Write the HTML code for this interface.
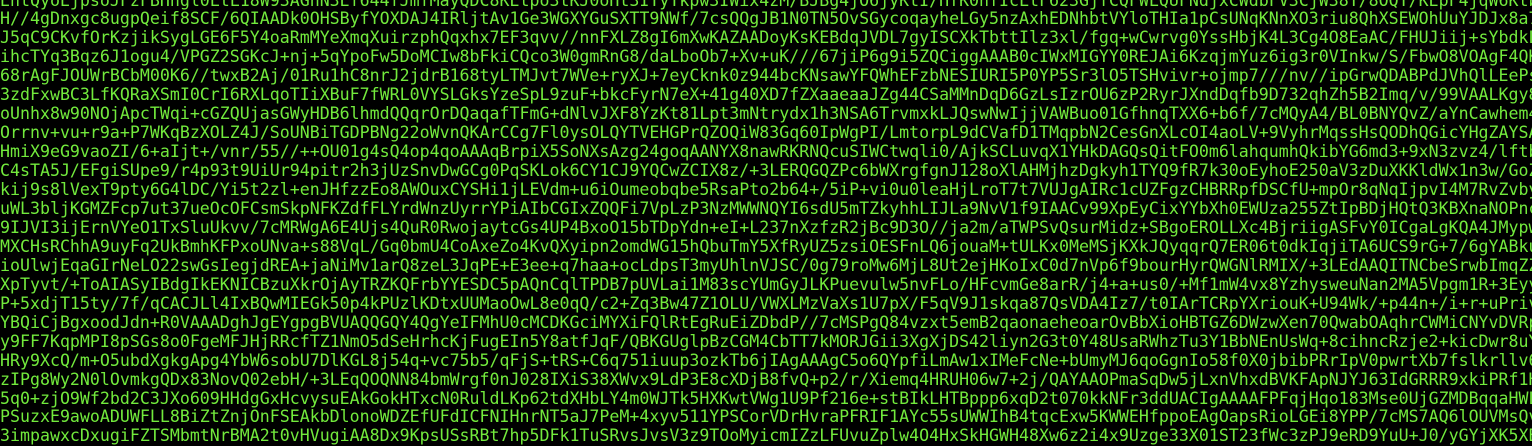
<!DOCTYPE html>
<html><head><meta charset="utf-8"><style>
html,body{margin:0;padding:0;background:#000;width:1532px;height:442px;overflow:hidden}
pre{position:absolute;left:0;top:-8.5px;margin:0;font-family:"DejaVu Sans Mono","Liberation Mono",monospace;font-size:16.6px;line-height:18.96px;color:#72ea3c;white-space:pre}
</style></head><body><pre>EhtQyoEjpsoJFzFBHhgl0LtL18W93AGhN3Ef644fJmfMayQDC8KEtpo3tKJ0oHt3ITyTkpw3IWix4zM/BJBg4jO6jyKtI/HfK0hfIcLtF623GjfCQFWLQUFNdjxCWdbFV3CjW38T/8OQT/KEpF4jqW6KtbC
H//4gDnxgc8ugpQeif8SCF/6QIAADk0OHSByfYOXDAJ4IRljtAv1Ge3WGXYGuSXTT9NWf/7csQQgJB1N0TN5OvSGycoqayheLGy5nzAxhEDNhbtVYloTHIa1pCsUNqKNnXO3riu8QhXSEWOhUuYJDJx8a7
J5qC9CKvfOrKzjikSygLGE6F5Y4oaRmMYeXmqXuirzphQqxhx7EF3qvv//nnFXLZ8gI6mXwKAZAADoyKsKEBdqJVDL7gyISCXkTbttIlz3xl/fgq+wCwrvg0YssHbjK4L3Cg4O8EaAC/FHUJiij+sYbdkL
ihcTYq3Bqz6J1ogu4/VPGZ2SGKcJ+nj+5qYpoFw5DoMCIw8bFkiCQco3W0gmRnG8/daLboOb7+Xv+uK///67jiP6g9i5ZQCiggAAAB0cIWxMIGYY0REJAi6KzqjmYuz6ig3r0VInkw/S/FbwO8VOAgF4QK
68rAgFJOUWrBCbM00K6//twxB2Aj/01Ru1hC8nrJ2jdrB168tyLTMJvt7WVe+ryXJ+7eyCknk0z944bcKNsawYFQWhEFzbNESIURI5P0YP5Sr3lO5TSHvivr+ojmp7///nv//ipGrwQDABPdJVhQlLEePs
3zdFxwBC3LfKQRaXSmI0CrI6RXLqoTIiXBuF7fWRL0VYSLGksYzeSpL9zuF+bkcFyrN7eX+41g40XD7fZXaaeaaJZg44CSaMMnDqD6GzLsIzrOU6zP2RyrJXndDqfb9D732qhZh5B2Imq/v/99VAALKgy8
oUnhx8w90NOjApcTWqi+cGZQUjasGWyHDB6lhmdQQqrOrDQaqafTFmG+dNlvJXF8YzKt81Lpt3mNtrydx1h3NSA6TrvmxkLJQswNwIjjVAWBuo01GfhnqTXX6+b6f/7cMQyA4/BL0BNYQvZ/aYnCawhem4
Orrnv+vu+r9a+P7WKqBzXOLZ4J/SoUNBiTGDPBNg22oWvnQKArCCg7Fl0ysOLQYTVEHGPrQZOQiW83Gq60IpWgPI/LmtorpL9dCVafD1TMqpbN2CesGnXLcOI4aoLV+9VyhrMqssHsQODhQGicYHgZAYSA
HmiX9eG9vaoZI/6+aIjt+/vnr/55//++OU01g4sQ4op4qoAAAqBrpiX5SoNXsAzg24goqAANYX8nawRKRNQcuSIWCtwqli0/AjkSCLuvqX1YHkDAGQsQitFO0m6lahqumhQkibYG6md3+9xN3zvz4/lftb
C4sTA5J/EFgiSUpe9/r4p93t9UiUr94pitr2h3jUzSnvDwGCg0PqSKLok6CY1CJ9YQCwZCIX8z/+3LERQGQZPc6bWXrgfgnJ128oXlAHMjhzDgkyh1TYQ9fR7k30oEyhoE250aV3zDuXKKldWx1n3w/GoZ
kij9s8lVexT9pty6G4lDC/Yi5t2zl+enJHfzzEo8AWOuxCYSHi1jLEVdm+u6iOumeobqbe5RsaPto2b64+/5iP+vi0u0leaHjLroT7t7VUJgAIRc1cUZFgzCHBRRpfDSCfU+mpOr8qNqIjpvI4M7RvZvby
uWL3bljKGMZFcp7ut37ueOcOFCsmSkpNFKZdfFLYrdWnzUyrrYPiAIbCGIxZQQFi7VpLzP3NzMWWNQYI6sdU5mTZkyhhLIJLa9NvV1f9IAACv99XpEyCixYYbXh0EWUza255ZtIpBDjHQtQ3KBXnaNOPnc
9IJVI3ijErnVYeO1TxSluUkvv/7cMRWgA6E4Ujs4QuR0RwojaytcGs4UP4BxoO15bTDpYdn+eI+L237nXzfzR2jBc9D3O//ja2m/aTWPSvQsurMidz+SBgoEROLLXc4BjriigASFvY0ICgaLgKQA4JMypw
MXCHsRChhA9uyFq2UkBmhKFPxoUNva+s88VqL/Gq0bmU4CoAxeZo4KvQXyipn2omdWG15hQbuTmY5XfRyUZ5zsiOESFnLQ6jouaM+tULKx0MeMSjKXkJQyqqrQ7ER06t0dkIqjiTA6UCS9rG+7/6gYABku
ioUlwjEqaGIrNeLO22swGsIegjdREA+jaNiMv1arQ8zeL3JqPE+E3ee+q7haa+ocLdpsT3myUhlnVJSC/0g79roMw6MjL8Ut2ejHKoIxC0d7nVp6f9bourHyrQWGNlRMIX/+3LEdAAQITNCbeSrwbImqZZ
XpTyvt/+ToAIASyIBdgIkEKNICBzuXkrOjAyTRZKQFrbYYESDC5pAQnCqlTPDB7pUVLai1M83scYUmGyJLKPuevulw5nvFLo/HFcvmGe8arR/j4+a+us0/+Mf1mW4vx8YzhysweuNan2MA5Vpgm1R+3Eyy
P+5xdjT15ty/7f/qCACJLl4IxBQwMIEGk50p4kPUzlKDtxUUMaoOwL8e0qQ/c2+Zq3Bw47Z1OLU/VWXLMzVaXs1U7pX/F5qV9J1skqa87QsVDA4Iz7/t0IArTCRpYXriouK+U94Wk/+p44n+/i+r+uPriv
YBQiCjBgxoodJdn+R0VAAADghJgEYgpgBVUAQQGQY4QgYeIFMhU0cMCDKGciMYXiFQlRtEgRuEiZDbdP//7cMSPgQ84vzxt5emB2qaonaeheoarOvBbXioHBTGZ6DWzwXen70QwabOAqhrCWMiCNYvDVRp
y9FF7KqpMPI8pSGs8o0FgeMFJHjRRcfTZ1NmO5dSeHrhcKjFugEIn5Y8atfJqF/QBKGUglpBzCGM4CbTT7kMORJGii3XgXjDS42liyn2G3t0Y48UsaRWhzTu3Y1BbNEnUsWq+8cihncRzje2+kicDwr8uY
HRy9XcQ/m+O5ubdXgkgApg4YbW6sobU7DlKGL8j54q+vc75b5/qFjS+tRS+C6q751iuup3ozkTb6jIAgAAAgC5o6QYpfiLmAw1xIMeFcNe+bUmyMJ6qoGgnIo58f0X0jbibPRrIpV0pwrtXb7fslkrllv6
zIPg8Wy2N0lOvmkgQDx83NovQ02ebH/+3LEqQOQNN84bmWrgf0nJ028IXiS38XWvx9LdP3E8cXDjB8fvQ+p2/r/Xiemq4HRUH06w7+2j/QAYAAOPmaSqDw5jLxnVhxdBVKFApNJYJ63IdGRRR9xkiPRf1H
5q0+zjO9Wf2bd2C3JXo609HHdgGxHcvysuEAkGokHTxcN0RuldLKp62tdXHbLY4m0WJTk5HXKwtVWg1U9Pf216e+stBIkLHTBppp6xqD2t070kkNFr3ddUACIgAAAAFPFqjHqo183Mse0UjGZMDBqqaHWL
PSuzxE9awoADUWFLL8BiZtZnjOnFSEAkbDlonoWDZEfUFdICFNIHnrNT5aJ7PeM+4xyv511YPSCorVDrHvraPFRIF1AYc55sUWWIhB4tqcExw5KWWEHfppoEAgOapsRioLGEi8YPP/7cMS7AQ6lOUVMsQv
3impawxcDxugiFZTSMbmtNrBMA2t0vHVugiAA8Dx9KpsUSsRBt7hp5DFk1TuSRvsJvsV3z9TOoMyicmIZzLFUvuZplw4O4HxSkHGWH48Xw6z2i4x9Uzge33X01ST23fWc3zPJ9eRD9YuU+J0/yGYjXK5XB</pre></body></html>
